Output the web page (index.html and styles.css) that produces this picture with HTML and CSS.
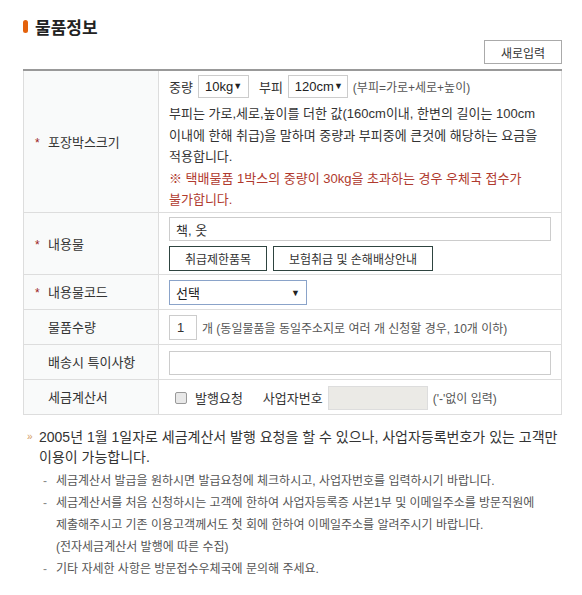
FILE: index.html
```html
<!DOCTYPE html>
<html lang="ko">
  <head>
    <meta charset="UTF-8" />
    <meta name="viewport" content="width=device-width, initial-scale=1.0" />
    <title>물품정보</title>
    <link rel="stylesheet" href="styles.css">
  </head>
  <body>
    <div class="wrap">
      <h2 class="title"><span class="dot"></span>물품정보</h2>
      <div class="top">
        <button class="btn-new">새로입력</button>
      </div>
      <table class="form">
        <tr class="r-box">
          <th><span class="star">*</span>포장박스크기</th>
          <td>
            <div class="size">
              <span>중량</span>
              <span class="sel sel-kg">10kg <i>▼</i></span>
              <span>부피</span>
              <span class="sel sel-cm">120cm <i>▼</i></span>
              <span class="sub">(부피=가로+세로+높이)</span>
            </div>
            <p>부피는 가로,세로,높이를 더한 값(160cm이내, 한변의 길이는 100cm<br>이내에 한해 취급)을 말하며 중량과 부피중에 큰것에 해당하는 요금을<br>적용합니다.</p>
            <p class="warn">※ 택배물품 1박스의 중량이 30kg을 초과하는 경우 우체국 접수가<br>불가합니다.</p>
          </td>
        </tr>
        <tr class="r-item">
          <th><span class="star">*</span>내용물</th>
          <td>
            <div class="inp inp-full">책, 옷</div>
            <div class="btns">
              <button class="btn-line b1">취급제한품목</button>
              <button class="btn-line b2">보험취급 및 손해배상안내</button>
            </div>
          </td>
        </tr>
        <tr class="r-code">
          <th><span class="star">*</span>내용물코드</th>
          <td>
            <span class="sel sel-code">선택 <i>▼</i></span>
          </td>
        </tr>
        <tr class="r-qty">
          <th><span class="nostar"></span>물품수량</th>
          <td>
            <div class="line">
              <span class="inp inp-qty">1</span>
              <span class="sub">개 (동일물품을 동일주소지로 여러 개 신청할 경우, 10개 이하)</span>
            </div>
          </td>
        </tr>
        <tr class="r-memo">
          <th><span class="nostar"></span>배송시 특이사항</th>
          <td>
            <div class="inp inp-full"></div>
          </td>
        </tr>
        <tr class="r-tax">
          <th><span class="nostar"></span>세금계산서</th>
          <td>
            <div class="line">
              <span class="chk"></span>
              <span class="chk-label">발행요청</span>
              <span class="biz">사업자번호</span>
              <span class="inp inp-biz"></span>
              <span class="sub">('-'없이 입력)</span>
            </div>
          </td>
        </tr>
      </table>

      <div class="notes">
        <p class="lead"><span class="arr">»</span>2005년 1월 1일자로 세금계산서 발행 요청을 할 수 있으나, 사업자등록번호가 있는 고객만 이용이 가능합니다.</p>
        <ul>
          <li>세금계산서 발급을 원하시면 발급요청에 체크하시고, 사업자번호를 입력하시기 바랍니다.</li>
          <li>세금계산서를 처음 신청하시는 고객에 한하여 사업자등록증 사본1부 및 이메일주소를 방문직원에<br>제출해주시고 기존 이용고객께서도 첫 회에 한하여 이메일주소를 알려주시기 바랍니다.<br>(전자세금계산서 발행에 따른 수집)</li>
          <li>기타 자세한 사항은 방문접수우체국에 문의해 주세요.</li>
        </ul>
      </div>
    </div>
  </body>
</html>
```

FILE: styles.css
```css
* {
  margin: 0;
  padding: 0;
  box-sizing: border-box;
}
body {
  font-family: "Liberation Sans", "Noto Sans CJK KR", sans-serif;
  color: #333;
  font-size: 13px;
  background: #fff;
}
.wrap {
  width: 539px;
  margin-left: 23px;
}
.title {
  display: flex;
  align-items: center;
  margin-top: 15px;
  height: 22px;
  font-size: 17px;
  font-weight: bold;
  color: #222;
}
.title .dot {
  width: 5px;
  height: 13px;
  border-radius: 3px;
  background: #e4620c;
  margin-right: 7px;
}
.top {
  display: flex;
  justify-content: flex-end;
  margin-top: 3px;
}
.btn-new {
  width: 78px;
  height: 24px;
  border: 1px solid #aaa;
  background: #fff;
  font: 12px "Liberation Sans", "Noto Sans CJK KR", sans-serif;
  color: #333;
}
.form {
  width: 100%;
  margin-top: 5px;
  border-collapse: collapse;
  border-top: 2px solid #999;
  border-left: 1px solid #ddd;
  border-right: 1px solid #ddd;
}
.form th,
.form td {
  border-bottom: 1px solid #ddd;
  text-align: left;
  font-weight: normal;
}
.form th {
  width: 135px;
  background: #f9fafa;
  border-right: 1px solid #ddd;
  padding-left: 11px;
  white-space: nowrap;
}
.star {
  display: inline-block;
  width: 13px;
  color: #9b2222;
  font-size: 12px;
}
.nostar {
  display: inline-block;
  width: 13px;
}
.form td {
  padding: 3px 10px 1px;
}
.form p {
  line-height: 21.5px;
}
.warn {
  color: #b03a2e;
}
.size,
.line {
  display: flex;
  align-items: center;
  gap: 5px;
}
.size {
  height: 24px;
  margin-bottom: 5px;
}
.sub {
  font-size: 12px;
  color: #555;
}
.sel {
  display: inline-flex;
  align-items: center;
  justify-content: space-between;
  height: 23px;
  padding: 0 6px;
  border: 1px solid #ccc;
  background: #fff;
  color: #222;
}
.sel i {
  font-style: normal;
  font-size: 9px;
  color: #222;
}
.sel-kg {
  width: 51px;
  margin-right: 5px;
}
.sel-cm {
  width: 60px;
}
.r-box th,
.r-box td {
  height: 142px;
}
.inp {
  display: flex;
  align-items: center;
  height: 24px;
  padding: 0 6px;
  border: 1px solid #ccc;
  background: #fff;
}
.inp-full {
  width: 382px;
}
.btns {
  display: flex;
  gap: 6px;
  margin-top: 5px;
}
.btn-line {
  height: 25px;
  border: 1px solid #2e4440;
  background: #fff;
  font: 12px "Liberation Sans", "Noto Sans CJK KR", sans-serif;
  color: #333;
}
.b1 {
  width: 98px;
}
.b2 {
  width: 160px;
}
.r-item th,
.r-item td {
  height: 62px;
}
.sel-code {
  width: 138px;
  height: 25px;
  border-color: #8aa3c9;
}
.r-code td,
.r-qty td,
.r-memo td,
.r-tax td {
  height: 35px;
}
.inp-qty {
  width: 28px;
  height: 25px;
  padding: 0 7px;
}
.chk {
  width: 12px;
  height: 12px;
  margin-left: 6px;
  border: 1px solid #999;
  border-radius: 2px;
  background: #e8e8e8;
}
.chk-label {
  margin-left: 3px;
}
.biz {
  margin-left: 15px;
}
.inp-biz {
  width: 100px;
  height: 24px;
  background: #ebeae6;
  border-color: #ddd;
}
.notes {
  margin-top: 12px;
}
.lead {
  position: relative;
  padding-left: 16px;
  font-size: 14px;
  line-height: 20px;
}
.arr {
  position: absolute;
  left: 4px;
  top: 0;
  font-size: 10px;
  color: #d39b62;
}
.notes ul {
  list-style: none;
  margin-top: 3px;
  padding-left: 20px;
}
.notes li {
  position: relative;
  padding-left: 13px;
  font-size: 12px;
  line-height: 22px;
  color: #555;
}
.notes li::before {
  content: "-";
  position: absolute;
  left: 0;
  color: #888;
}
```
